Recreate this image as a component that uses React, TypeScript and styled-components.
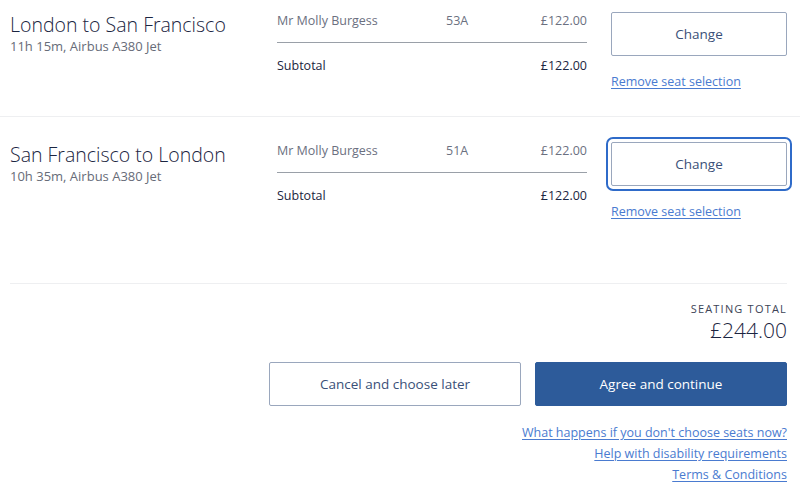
import React from "react";
import styled, { createGlobalStyle } from "styled-components";

const GlobalStyle = createGlobalStyle`
  html, body {
    margin: 0;
    padding: 0;
    background: #ffffff;
  }
  body {
    font-family: "Open Sans", "Noto Sans", sans-serif;
    color: #1b2541;
  }
`;

const Page = styled.div`
  width: 800px;
  overflow: hidden;
`;

const FlightRow = styled.section<{ $top: number; $bottom: number; $divider?: boolean }>`
  display: grid;
  grid-template-columns: 243px 310px 176px;
  column-gap: 24px;
  padding: ${(p) => p.$top}px 13px ${(p) => p.$bottom}px 10px;
  border-bottom: ${(p) => (p.$divider ? "1px solid #eeeff1" : "none")};
`;

const Route = styled.div`
  display: flex;
  flex-direction: column;
`;

const RouteTitle = styled.h2`
  margin: 0;
  font-size: 19.5px;
  font-weight: 300;
  line-height: 26px;
  color: #1b2541;
`;

const RouteMeta = styled.div`
  font-size: 13px;
  line-height: 18px;
  color: #676c78;
  margin-top: -1px;
`;

const SeatTable = styled.div`
  display: flex;
  flex-direction: column;
`;

const SeatLine = styled.div<{ $total?: boolean }>`
  display: grid;
  grid-template-columns: 169px 1fr 90px;
  align-items: center;
  font-size: 12.5px;
  line-height: 18px;
  color: ${(p) => (p.$total ? "#1b2541" : "#6b7080")};
  padding: ${(p) => (p.$total ? "14px 0 0" : "0 0 12px")};
  border-bottom: ${(p) => (p.$total ? "none" : "1px solid #9aa0a8")};
`;

const Cell = styled.span<{ $align?: "left" | "right" }>`
  text-align: ${(p) => p.$align || "left"};
`;

const Actions = styled.div`
  display: flex;
  flex-direction: column;
  align-items: flex-start;
`;

const OutlineButton = styled.button<{ $focused?: boolean }>`
  box-sizing: border-box;
  width: 100%;
  height: 44px;
  background: #ffffff;
  border: 1px solid #9aa7bd;
  border-radius: 2px;
  font-family: "Open Sans", "Noto Sans", sans-serif;
  font-size: 13.5px;
  color: #3a5078;
  cursor: pointer;
  outline: ${(p) => (p.$focused ? "2px solid #2f6bc9" : "none")};
  outline-offset: 3px;
`;

const TextLink = styled.a`
  font-size: 12.5px;
  line-height: 21px;
  color: #4a7bd0;
  text-decoration: underline;
  text-underline-offset: 2px;
  cursor: pointer;
`;

const RemoveLink = styled(TextLink)`
  margin-top: 15px;
`;

const Summary = styled.div`
  margin: 0 13px 0 10px;
  padding-top: 17px;
  border-top: 1px solid #eeeff1;
  display: flex;
  flex-direction: column;
  align-items: flex-end;
`;

const TotalLabel = styled.div`
  font-size: 11px;
  letter-spacing: 1.2px;
  text-transform: uppercase;
  color: #3d4456;
  line-height: 16px;
`;

const TotalAmount = styled.div`
  font-size: 21px;
  font-weight: 300;
  line-height: 26px;
  color: #1b2541;
`;

const ButtonBar = styled.div`
  display: flex;
  gap: 14px;
  margin-top: 19px;
`;

const FooterButton = styled.button<{ $primary?: boolean }>`
  box-sizing: border-box;
  width: 252px;
  height: 44px;
  border-radius: 2px;
  font-family: "Open Sans", "Noto Sans", sans-serif;
  font-size: 13.5px;
  cursor: pointer;
  background: ${(p) => (p.$primary ? "#2d5b9a" : "#ffffff")};
  color: ${(p) => (p.$primary ? "#ffffff" : "#3a5078")};
  border: 1px solid ${(p) => (p.$primary ? "#2d5b9a" : "#9aa7bd")};
`;

const HelpLinks = styled.nav`
  display: flex;
  flex-direction: column;
  align-items: flex-end;
  margin-top: 16px;
`;

type Flight = {
  route: string;
  meta: string;
  passenger: string;
  seat: string;
  price: string;
};

const flights: Flight[] = [
  {
    route: "London to San Francisco",
    meta: "11h 15m, Airbus A380 Jet",
    passenger: "Mr Molly Burgess",
    seat: "53A",
    price: "£122.00",
  },
  {
    route: "San Francisco to London",
    meta: "10h 35m, Airbus A380 Jet",
    passenger: "Mr Molly Burgess",
    seat: "51A",
    price: "£122.00",
  },
];

const App = () => {
  return (
    <Page>
      <GlobalStyle />
      {flights.map((f, i) => (
        <FlightRow
          key={f.route}
          $top={i === 0 ? 12 : 25}
          $bottom={i === 0 ? 24 : 61}
          $divider={i === 0}
        >
          <Route>
            <RouteTitle>{f.route}</RouteTitle>
            <RouteMeta>{f.meta}</RouteMeta>
          </Route>
          <SeatTable>
            <SeatLine>
              <Cell>{f.passenger}</Cell>
              <Cell>{f.seat}</Cell>
              <Cell $align="right">{f.price}</Cell>
            </SeatLine>
            <SeatLine $total>
              <Cell>Subtotal</Cell>
              <Cell />
              <Cell $align="right">{f.price}</Cell>
            </SeatLine>
          </SeatTable>
          <Actions>
            <OutlineButton $focused={i === 1}>Change</OutlineButton>
            <RemoveLink>Remove seat selection</RemoveLink>
          </Actions>
        </FlightRow>
      ))}
      <Summary>
        <TotalLabel>Seating total</TotalLabel>
        <TotalAmount>£244.00</TotalAmount>
        <ButtonBar>
          <FooterButton>Cancel and choose later</FooterButton>
          <FooterButton $primary>Agree and continue</FooterButton>
        </ButtonBar>
        <HelpLinks>
          <TextLink>What happens if you don't choose seats now?</TextLink>
          <TextLink>Help with disability requirements</TextLink>
          <TextLink>Terms &amp; Conditions</TextLink>
        </HelpLinks>
      </Summary>
    </Page>
  );
};

export default App;
